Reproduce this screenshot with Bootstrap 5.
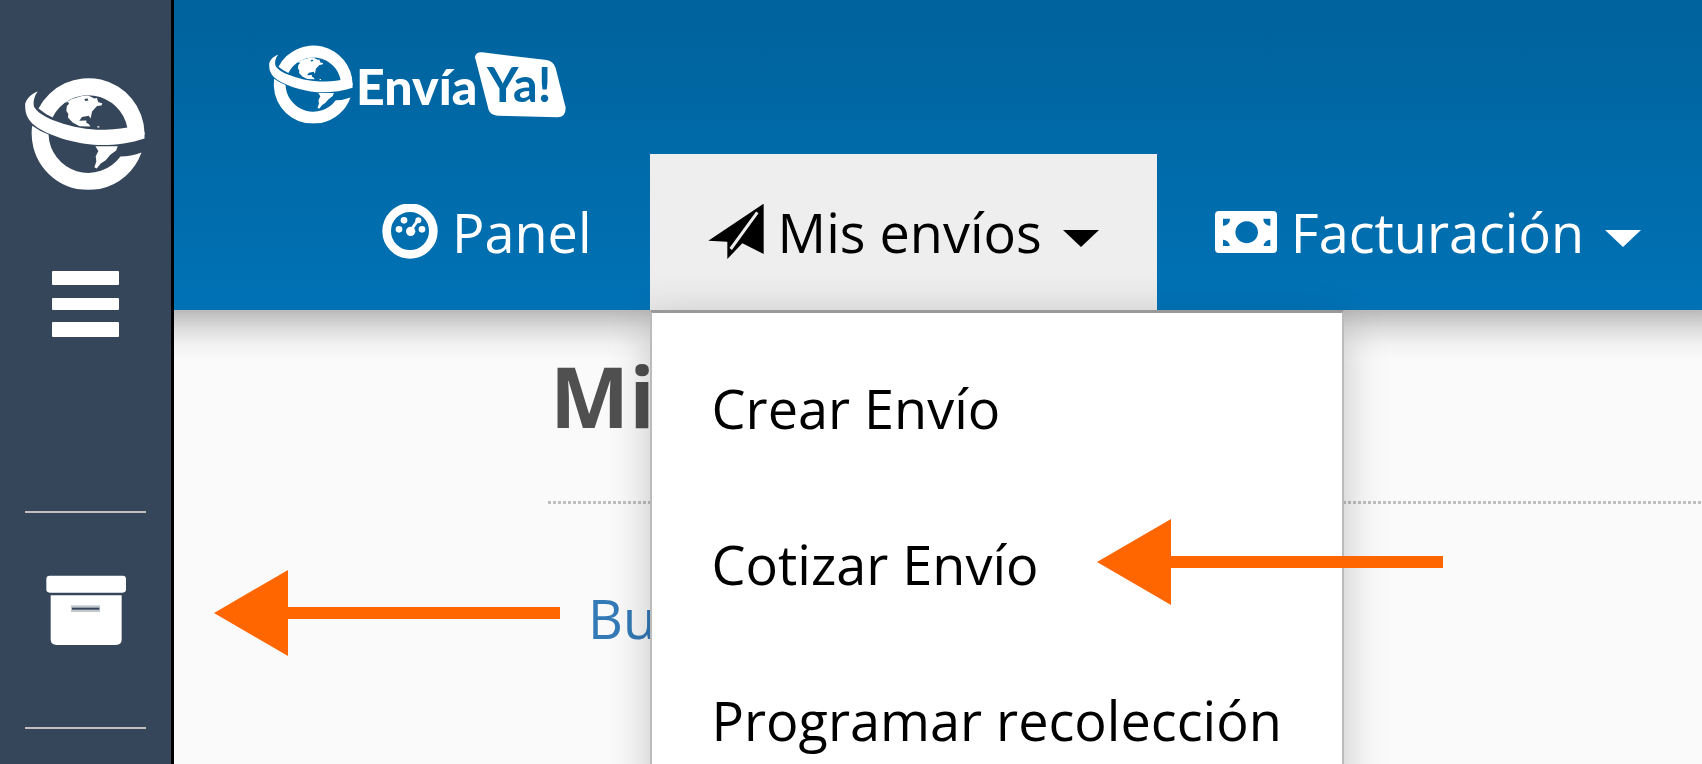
<!DOCTYPE html>
<html lang="es">
<head>
<meta charset="utf-8">
<meta name="viewport" content="width=device-width, initial-scale=1">
<title>EnvíaYa!</title>
<link href="https://cdn.jsdelivr.net/npm/bootstrap@5.3.0/dist/css/bootstrap.min.css" rel="stylesheet">
<style>
body{font-family:"Open Sans","Noto Sans",sans-serif;font-size:54px;line-height:76px;color:#000;background:#fafafa}
.app-shell{height:100vh}
.side-rail{width:174px;background:#35465b;border-right:3px solid #000;padding:76px 25px 0}
.side-logo{width:120px;height:114px}
.side-toggle{margin-top:81px;line-height:0}
.side-rule{height:2px;background:#bfbfbf}
.side-toggle + .side-rule{margin-top:174px}
.side-item{height:214px;padding-bottom:20px}
.app-header{background:linear-gradient(#00629c,#0072b5);padding-top:44px;z-index:2}
.app-header::after{content:"";position:absolute;top:100%;left:0;right:0;height:50px;background:linear-gradient(rgba(0,0,0,.26),rgba(0,0,0,.12) 36%,rgba(0,0,0,.03) 70%,transparent)}
.brand-link{margin-left:95px;width:298px;height:80px}
.main-nav{margin:30px 0 0 150px}
.main-nav .nav-link{padding:40px 58px;color:#fff;font-size:54px;line-height:76px;border-radius:0;gap:14px}
.main-nav .nav-link.active{background:linear-gradient(#eee 75%,#e7e7e7);color:#000}
.main-nav .nav-link.dropdown-toggle::after{margin:12px 0 0 7px;border-top:17px solid;border-left:18px solid transparent;border-right:18px solid transparent}
.main-nav .dropdown-menu{top:100%;left:0;margin:0;padding:17px 0;border:2px solid #bbb;border-top:3px solid #999;border-radius:0;box-shadow:0 16px 40px rgba(0,0,0,.22);font-size:54px}
.main-nav .dropdown-item{padding:40px 60px;line-height:76px;color:#000}
.page-body{padding:29px 0 0 374px}
.page-title{font-size:84px;line-height:114px;font-weight:700;color:#505050;margin:0;padding-left:2px}
.page-rule{height:3px;margin-top:48px;background:repeating-linear-gradient(90deg,#bfbfbf 0 3px,transparent 3px 5px)}
.search-link{display:inline-block;margin:76px 0 0 40px;color:#337ab7;text-decoration:none}
.pointer-arrow{position:absolute;width:346px;height:86px;fill:#f60;z-index:5;pointer-events:none}
.side-item .pointer-arrow{left:189px;top:57px}
.dropdown-item .pointer-arrow{left:445px;top:33px}
</style>
</head>
<body>
<svg class="d-none" aria-hidden="true">
  <symbol id="globe-e" viewBox="75 80 358 341">
    <path d="M115 177A168 168 0 0 1 432 250V256L381 236A119 119 0 0 0 157 204Q135 194 115 177z"/>
    <path d="M113 126C101 140 98 160 102 173C112 190 134 202 155 211C200 229 245 239 290 241C325 241 355 238 381 234L432 248V267C385 283 330 289 280 286C210 280 130 253 97 223C78 202 75 190 75 163C80 146 95 132 113 126z"/>
    <path d="M96 229A168 169 0 0 0 230 418Q264 422 298 418A168 168 0 0 0 423 309Q392 321 360 321A119 119 0 0 1 145 255Q118 245 96 229z"/>
    <path fill-rule="evenodd" d="M195 159L215 149 245 140 264 138 282 147 290 146 293 158 306 162 303 168 290 170 275 186 271 207 265 199 245 203 237 214 258 213 258 220 266 224 270 231 238 230 217 219 203 204 204 194 198 184 200 169 206 164 204 158zM252 149L255 155 264 153 262 147zM291 230h6v4h-6z"/>
    <path d="M285 290H352L347 303 329 316 316 332 301 342 289 357 282 353 288 336 286 320 294 304z"/>
  </symbol>
  <symbol id="arrow-left" viewBox="0 0 346 86"><path d="M0 43L74 0V37H346V49H74V86z"/></symbol>
</svg>

<div class="app-shell d-flex overflow-hidden">
  <aside class="side-rail flex-shrink-0 d-flex flex-column position-relative z-3">
    <a href="#" class="d-block lh-1" aria-label="Inicio"><svg class="side-logo d-block" fill="#fff"><use href="#globe-e"/></svg></a>
    <button type="button" class="side-toggle btn border-0 p-0 align-self-center" aria-label="Menú">
      <svg width="67" height="66" fill="#fff"><rect width="67" height="14" rx="1"/><rect y="27" width="67" height="12" rx="1"/><rect y="51" width="67" height="15" rx="1"/></svg>
    </button>
    <div class="side-rule"></div>
    <div class="side-item position-relative d-flex align-items-center justify-content-center">
      <a href="#" class="lh-1 d-flex" aria-label="Paquetes">
        <svg width="82" height="70" viewBox="135 285 246 210" fill="#fff"><rect x="139" y="287" width="239" height="51" rx="10"/><path fill-rule="evenodd" d="M152 346H365V478Q365 495 348 495H170Q152 495 152 478z"/><path fill="#34465b" d="M216 383h82v6h-82z"/><path fill="#34465b" fill-opacity=".3" d="M213 376h87v20h-87z"/></svg>
      </a>
      <svg class="pointer-arrow" aria-hidden="true"><use href="#arrow-left"/></svg>
    </div>
    <div class="side-rule"></div>
  </aside>

  <div class="flex-grow-1 d-flex flex-column">
    <header class="app-header position-relative">
      <a href="#" class="brand-link d-block" aria-label="EnvíaYa!">
        <svg class="d-block" width="298" height="80" viewBox="57 44 894 240" fill="#fff" font-family="Lato, sans-serif">
          <use href="#globe-e" x="57" y="44" width="252" height="239"/>
          <text x="318" y="226" font-size="150" font-weight="900">Envía</text>
          <path d="M675 84Q677 68 696 69L890 92Q911 96 917 117L947 235Q947 264 922 264L742 259Q722 257 716 242z"/>
          <text x="711" y="218" font-size="146" font-weight="700" fill="#0067a5">Ya!</text>
        </svg>
      </a>
      <ul class="main-nav nav flex-nowrap">
        <li class="nav-item">
          <a class="nav-link d-flex align-items-center" href="#">
            <svg width="56" height="56" viewBox="40 190 168 168"><circle cx="124" cy="271" r="70" fill="none" stroke="#fff" stroke-width="26"/><g fill="#fff"><circle cx="106" cy="239" r="10"/><circle cx="149" cy="239" r="9"/><circle cx="91" cy="266" r="10"/><circle cx="160" cy="266" r="10"/><circle cx="126" cy="272" r="14"/></g><path d="M127 268L148 238" stroke="#fff" stroke-width="9"/></svg>
            <span>Panel</span>
          </a>
        </li>
        <li class="nav-item dropdown">
          <a class="nav-link active dropdown-toggle d-flex align-items-center" href="#" role="button" aria-expanded="true">
            <svg width="56" height="56" viewBox="1016 190 168 168"><path d="M1183 189V340L1119 308 1074 355V303L1017 300z"/><path d="M1084 325L1164 215" stroke="#eee" stroke-width="9"/></svg>
            <span>Mis envíos</span>
          </a>
          <ul class="dropdown-menu show">
            <li><a class="dropdown-item" href="#">Crear Envío</a></li>
            <li><a class="dropdown-item position-relative" href="#">Cotizar Envío<svg class="pointer-arrow" aria-hidden="true"><use href="#arrow-left"/></svg></a></li>
            <li><a class="dropdown-item" href="#">Programar recolección</a></li>
          </ul>
        </li>
        <li class="nav-item">
          <a class="nav-link dropdown-toggle d-flex align-items-center" href="#" role="button" aria-expanded="false">
            <svg width="62" height="42" viewBox="105 213 186 126"><path fill="#fff" fill-rule="evenodd" d="M117 213H279Q291 213 291 225V327Q291 339 279 339H117Q105 339 105 327V225Q105 213 117 213zM200 244a34 33 0 1 0 .1 0zM129 236h21a20 20 0 0 1-21 21zM271 236h-21a20 20 0 0 0 21 21zM129 318v-19a20 20 0 0 1 20 19zM271 318v-19a20 20 0 0 0-20 19z"/></svg>
            <span>Facturación</span>
          </a>
        </li>
      </ul>
    </header>
    <main class="page-body flex-grow-1">
      <h1 class="page-title">Mi</h1>
      <div class="page-rule"></div>
      <a class="search-link" href="#">Bu</a>
    </main>
  </div>
</div>
<script src="https://cdn.jsdelivr.net/npm/bootstrap@5.3.0/dist/js/bootstrap.bundle.min.js"></script>
</body>
</html>
